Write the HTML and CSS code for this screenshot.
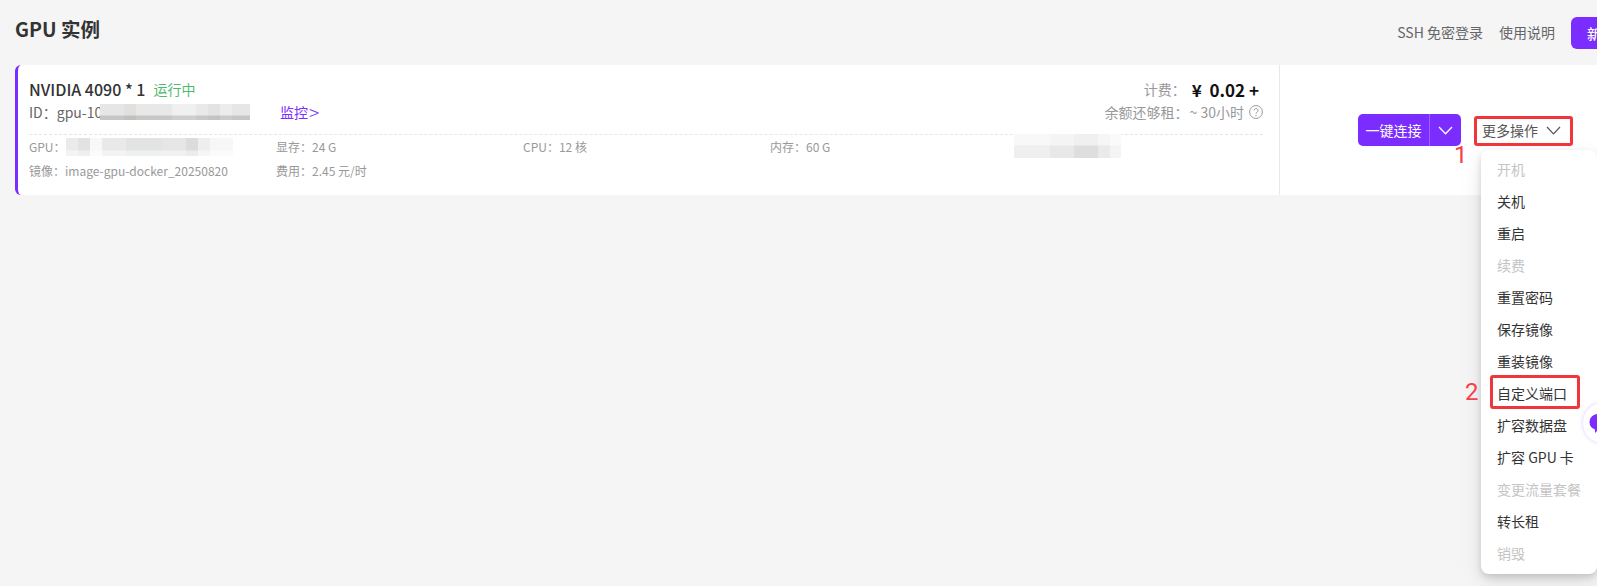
FILE: index.html
```html
<!DOCTYPE html>
<html lang="zh-CN">
<head>
<meta charset="utf-8">
<title>GPU 实例</title>
<link rel="stylesheet" href="styles.css">
</head>
<body>
<div class="page">
  <header class="top">
    <h1 class="title">GPU 实例</h1>
    <nav class="top-links">
      <a class="top-link">SSH 免密登录</a>
      <a class="top-link">使用说明</a>
      <button class="new-btn">新建实例</button>
    </nav>
  </header>
  <section class="card">
    <div class="main">
      <div class="head">
        <div class="head-left">
          <div class="name-row"><span class="name">NVIDIA 4090 * 1</span><span class="status">运行中</span></div>
          <div class="id-row">
            <span class="id">ID：<span>gpu-10</span><i class="blur blur-id"></i></span>
            <a class="monitor">监控<span class="gt">&gt;</span></a>
          </div>
        </div>
        <div class="head-right">
          <div class="fee-row"><span class="fee-label">计费：</span><strong class="fee">¥&nbsp; 0.02 +</strong></div>
          <div class="left-row"><span>余额还够租：</span><span class="hours">~ 30小时</span>
            <svg class="help" viewBox="0 0 14 14" width="14" height="14"><circle cx="7" cy="7" r="6.400" fill="none" stroke="#999" stroke-width="1"/><path d="M5 5.500a2 2 0 1 1 3 1.700c-.7.400-1 .8-1 1.500" fill="none" stroke="#999" stroke-width="1"/><circle cx="7" cy="10.500" r=".7" fill="#999"/></svg>
          </div>
        </div>
      </div>
      <div class="specs">
        <div class="spec spec-gpu">GPU：<i class="blur blur-gpu"></i></div>
        <div class="spec">显存：24 G</div>
        <div class="spec">CPU：12 核</div>
        <div class="spec">内存：60 G</div>
        <div class="spec spec-blur"><i class="blur blur-extra"></i></div>
        <div class="spec">镜像：image-gpu-docker_20250820</div>
        <div class="spec">费用：2.45 元/时</div>
      </div>
    </div>
    <div class="side">
      <div class="split">
        <button class="split-main">一键连接</button>
        <button class="split-arrow"><svg viewBox="0 0 15 9" width="15" height="9"><path d="M1 1l6.500 6.800L14 1" fill="none" stroke="#fff" stroke-width="1.300"/></svg></button>
      </div>
      <button class="more">更多操作<svg viewBox="0 0 15 9" width="15" height="9"><path d="M1 1l6.500 6.800L14 1" fill="none" stroke="#555" stroke-width="1.200"/></svg></button>
    </div>
  </section>
</div>

<ul class="menu">
  <li class="off">开机</li>
  <li>关机</li>
  <li>重启</li>
  <li class="off">续费</li>
  <li>重置密码</li>
  <li>保存镜像</li>
  <li>重装镜像</li>
  <li>自定义端口</li>
  <li>扩容数据盘</li>
  <li>扩容 GPU 卡</li>
  <li class="off">变更流量套餐</li>
  <li>转长租</li>
  <li class="off">销毁</li>
</ul>

<div class="mark mark-more"></div>
<div class="mark mark-port"></div>
<span class="num num-1">1</span>
<span class="num num-2">2</span>

<div class="chat"><svg viewBox="0 0 20 20" width="20" height="20"><path d="M10 0a8.500 8 0 0 1 8.500 8c0 4.300-3.700 7.500-8.500 8l-3 3v-3.500A8 8 0 0 1 1.500 8 8.500 8 0 0 1 10 0z" fill="#7b2cff"/></svg></div>
</body>
</html>
```
FILE: styles.css
```css
* { box-sizing: border-box; }
html, body { margin: 0; height: 100%; }
body {
  position: relative;
  width: 1597px;
  height: 586px;
  overflow: hidden;
  background: #f5f5f5;
  color: #333;
  font-family: "Noto Sans CJK SC", "Noto Sans", sans-serif;
  font-size: 14px;
}
.page { width: 1700px; padding-left: 15px; }
.top {
  display: flex;
  justify-content: space-between;
  align-items: center;
  height: 65px;
  padding-bottom: 1px;
}
.title { margin: 0 0 6px; font-size: 19.500px; font-weight: 700; color: #333; line-height: 26px; }
.top-links {
  display: flex;
  align-items: center;
  gap: 16px;
  margin-right: 33px;
  color: #666;
  font-size: 14px;
  white-space: nowrap;
}
.new-btn {
  flex: none;
  width: 96px;
  height: 32px;
  margin-top: 2px;
  border: 0;
  padding: 0 0 0 16px;
  text-align: left;
  border-radius: 6px;
  background: #7b2cff;
  color: #fff;
  font: 500 14px "Noto Sans CJK SC", sans-serif;
}
.card {
  display: flex;
  width: 1600px;
  height: 130px;
  background: #fff;
  border-left: 3px solid #7b2cff;
  border-radius: 6px;
}
.main { flex: none; width: 1262px; padding: 11px 16px 0 11px; border-right: 1px solid #e8e8e8; }
.head { display: flex; justify-content: space-between; height: 59px; border-bottom: 1px dashed #e6e6e6; }
.name-row { display: flex; align-items: center; height: 26px; gap: 8px; }
.name { font-size: 16px; font-weight: 500; color: #333; }
.status { color: #52b96f; font-size: 14px; }
.id-row { display: flex; align-items: center; height: 20px; color: #666; font-size: 14px; }
.id { display: flex; align-items: center; width: 251px; }
.monitor { display: flex; align-items: center; color: #7b2cff; }
.gt { font-size: 19px; font-weight: 300; line-height: 20px; margin-left: 1px; }
.blur { display: inline-block; filter: blur(.6px); }
.blur-id {
  width: 150px;
  height: 16px;
  margin-left: -2px;
  background:
    linear-gradient(180deg, transparent 0 11px, rgba(0,0,0,.14) 12px 16px),
    linear-gradient(90deg, #e6e6e6 0 24px, #e2dfdc 24px 36px, #e8e8e8 36px 72px, #f0f0f0 72px 96px, #e9e9e9 96px 108px, #e1e3e5 108px 120px, #ececec 120px 132px, #e6e6e6 132px 150px);
}
.head-right { padding-top: 1px; text-align: right; color: #999; }
.fee-row { display: flex; justify-content: flex-end; align-items: center; height: 24px; padding-right: 4px; gap: 6px; }
.fee { font-size: 17px; font-weight: 700; color: #111; }
.left-row { display: flex; justify-content: flex-end; align-items: center; height: 22px; gap: 1px; }
.help { margin-left: 4px; }
.specs {
  display: grid;
  grid-template-columns: repeat(5, 247px);
  grid-auto-rows: 24px;
  color: #999;
  font-size: 12px;
  line-height: 24px;
}
.spec { white-space: nowrap; }
.spec-gpu { display: flex; align-items: center; }
.blur-gpu {
  width: 167px;
  height: 18px;
  background:
    linear-gradient(180deg, transparent 0 12px, rgba(255,255,255,.45) 13px 18px),
    linear-gradient(90deg, #ebebeb 0 12px, #e2e2e2 12px 24px, #f8f8f8 24px 36px, #e9e9e9 36px 60px, #e2e3e4 60px 96px, #e6e6e6 96px 120px, #dcdcdc 120px 132px, #eeeeee 132px 144px, #f7f7f7 144px 167px);
}
.spec-blur { display: flex; align-items: flex-start; }
.blur-extra {
  width: 107px;
  height: 24px;
  margin: -1px 0 0 -3px;
  background:
    linear-gradient(180deg, rgba(255,255,255,.55) 0 11px, transparent 12px 24px),
    linear-gradient(90deg, #efefef 0 36px, #e8e8e8 36px 60px, #dedede 60px 84px, #eaeaea 84px 96px, #f4f4f4 96px 107px);
}
.side { flex: none; display: flex; align-items: flex-start; gap: 20px; padding: 49px 0 0 78px; }
.split { display: flex; width: 103px; height: 32px; background: #7b2cff; border-radius: 5px; }
.split-main, .split-arrow {
  padding: 0;
  border: 0;
  background: none;
  color: #fff;
  font: 14px "Noto Sans CJK SC", sans-serif;
}
.split-main { width: 72px; border-right: 1px solid #9d63ff; }
.split-arrow { flex: 1; display: flex; align-items: center; justify-content: center; }
.more {
  display: flex;
  align-items: center;
  gap: 8px;
  height: 32px;
  margin-left: 1px;
  padding: 0;
  border: 0;
  background: none;
  color: #555;
  font: 14px "Noto Sans CJK SC", sans-serif;
}
.menu {
  position: absolute;
  left: 1481px;
  top: 150px;
  width: 116px;
  height: 424px;
  margin: 0;
  padding: 3px 0;
  list-style: none;
  background: #fff;
  border-radius: 8px;
  box-shadow: 0 6px 16px rgba(0,0,0,.08), 0 3px 6px rgba(0,0,0,.12), 0 9px 28px rgba(0,0,0,.05);
  color: #333;
  font-size: 14px;
}
.menu li { height: 32px; line-height: 32px; padding-left: 16px; white-space: nowrap; }
.menu .off { color: #c4c4c4; }
.mark { position: absolute; border: 3px solid #f0353b; border-radius: 3px; }
.mark-more { left: 1474px; top: 116px; width: 99px; height: 30px; }
.mark-port { left: 1490px; top: 375px; width: 90px; height: 34px; }
.num { position: absolute; color: #f5404a; font: 400 24px Roboto, sans-serif; line-height: 24px; }
.num-1 { left: 1454px; top: 143px; }
.num-2 { left: 1465px; top: 380px; }
.chat {
  position: absolute;
  left: 1583px;
  top: 403px;
  width: 40px;
  height: 40px;
  display: flex;
  align-items: center;
  padding: 2px 0 0 5px;
  border-radius: 50%;
  background: #fff;
  box-shadow: 0 0 4px rgba(123,44,255,.25);
}
```
